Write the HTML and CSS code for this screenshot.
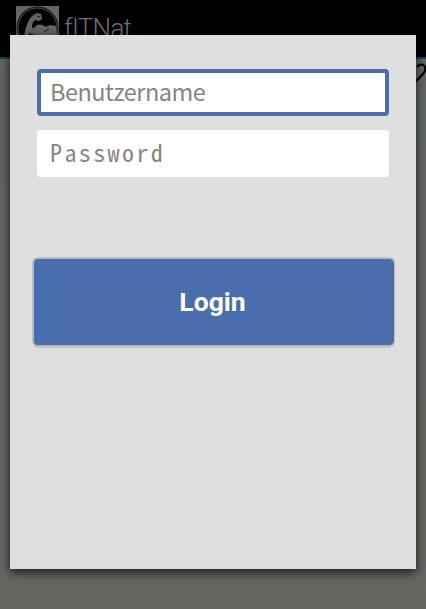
FILE: index.html
```html
<!DOCTYPE html>
<html lang="de">
<head>
<meta charset="utf-8">
<title>fITNat</title>
<link rel="stylesheet" href="styles.css">
</head>
<body>
<header class="bar">
  <svg class="logo" viewBox="0 0 43 43">
    <path fill="#646864" d="M0 0h43v43H0z"/>
    <circle cx="21.5" cy="21.5" r="21" fill="#111"/>
    <circle cx="21.5" cy="21.5" r="19.5" fill="#000" stroke="#626762" stroke-width=".8"/>
    <path fill="#626762" d="M8 33C8 26 10 20 13 14c2-3 5-6 8-7l4 1 1 5-3 2-4-1c-2 2-3 4-3 6l1 3c3-4 7-6 11-3 3 1 4 0 6-1l6 1 1 10H20c-3-2-5-3-8-2 3 1 4 2 5 5z"/>
    <path fill="none" stroke="#000" stroke-width=".8" d="M21 10l3 1M28 26l5-3"/>
  </svg>
  <h1 class="name">fITNat</h1>
</header>
<svg class="mark" viewBox="0 0 12 24"><path d="M3 6C4 4 6 3.5 8 3.6c3 .4 4 3.5 2.800 6.400C9 14 6 16 2 20.500" fill="none" stroke="#000" stroke-width="2.200"/></svg>
<main class="dialog">
  <input class="field active" placeholder="Benutzername">
  <input class="field password" type="password" placeholder="Password">
  <button class="login">Login</button>
</main>
</body>
</html>
```
FILE: styles.css
```css
* { box-sizing: border-box; }
body {
  margin: 0;
  height: 609px;
  overflow: hidden;
  position: relative;
  background: linear-gradient(#636863, #646862 540px, #636661);
  font-family: Roboto, sans-serif;
}
.bar {
  display: flex;
  height: 59px;
  padding: 6px 16px 0;
  gap: 5px;
  background: #000;
  border-bottom: 2px solid #0b465c;
}
.logo { width: 43px; height: 43px; }
.name { margin: 7px 0 0; font-size: 26px; line-height: 30px; font-weight: 300; letter-spacing: -.7px; color: #707270; }
.mark { position: absolute; left: 414px; top: 61px; width: 12px; height: 24px; }
.dialog {
  position: absolute;
  left: 10px;
  top: 35px;
  width: 406px;
  height: 534px;
  padding: 34px 22px 0 23px;
  display: flex;
  flex-direction: column;
  background: #dfdfdf;
  box-shadow: 0 3px 10px rgba(0, 0, 0, .8);
}
.field {
  width: 352px;
  height: 47px;
  margin: 0 0 14px 4px;
  padding: 0 13px 4px;
  border: 0;
  border-radius: 3px;
  background: #fff;
  font: 24px "Noto Sans CJK SC", sans-serif;
  outline: 0;
}
.field::placeholder { color: #858585; opacity: 1; }
.active { border: 4px solid #4a6dae; border-radius: 4px; padding: 0 9px 4px; font-size: 23.5px; letter-spacing: -.5px; }
.password { font-family: "Noto Sans Mono CJK SC", "DejaVu Sans Mono", monospace; letter-spacing: 2.4px; }
.login {
  width: 361px;
  height: 88px;
  margin-top: 67px;
  padding: 0 3px 2px 0;
  border: 1px solid #b5b5ba;
  border-width: 1px 0 1px 1px;
  border-radius: 5px;
  box-shadow: 0 0 0 1px #bfbcbe, 0 2px 1px #cbcbcb;
  background: #4a6dae;
  color: #fff;
  font: bold 26.5px Roboto, sans-serif;
}
```
